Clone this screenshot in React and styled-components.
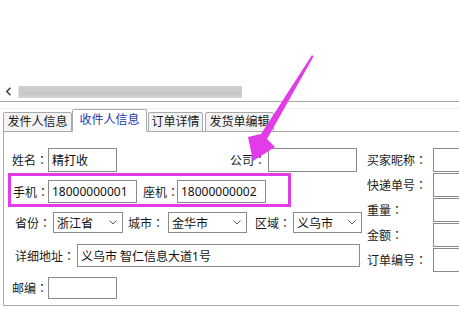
import React from 'react';
import styled, { createGlobalStyle } from 'styled-components';

const GlobalStyle = createGlobalStyle`
  html, body {
    margin: 0;
    padding: 0;
    background: #ffffff;
    overflow: hidden;
  }
  body {
    font-family: "Noto Sans", "Noto Sans CJK SC", sans-serif;
    font-size: 12px;
    color: #1a1a1a;
  }
`;

const Page = styled.div`
  position: relative;
  width: 459px;
  height: 310px;
  overflow: hidden;
`;

const AddressRow = styled.div`
  display: flex;
  align-items: center;
  height: 13px;
  margin-top: 85px;
  padding-left: 5px;
`;

const BackChevron = styled.svg`
  width: 7px;
  height: 9px;
  margin-right: 6px;
`;

const BlurBar = styled.div`
  width: 223px;
  height: 12px;
  background: linear-gradient(180deg, #cfcfcf 0%, #c6c6c6 70%, #d6d6d6 100%);
  border-left: 1px solid #e4e4e4;
`;

const Divider = styled.div`
  margin-top: 3px;
  height: 1px;
  background: #a6a6a6;
  box-shadow: 0 7px 0 #f0f0f0;
`;

const TabStrip = styled.div`
  display: flex;
  align-items: flex-end;
  margin-top: 7px;
  padding-left: 3px;
  position: relative;
  z-index: 1;
`;

const Tab = styled.div`
  box-sizing: border-box;
  width: ${p => p.$w}px;
  height: ${p => (p.$active ? 23 : 20)}px;
  margin-left: ${p => p.$ml || 0}px;
  margin-bottom: -1px;
  border: 1px solid #a9a9a9;
  border-bottom: ${p => (p.$active ? '1px solid #ffffff' : '1px solid #a9a9a9')};
  border-radius: 2px 2px 0 0;
  background: ${p => (p.$active ? '#ffffff' : '#f3f3f3')};
  color: ${p => (p.$active ? '#2438b0' : '#1a1a1a')};
  font-size: 12px;
  line-height: ${p => (p.$active ? 19 : 17)}px;
  text-align: center;
  white-space: nowrap;
  position: relative;
  z-index: ${p => (p.$active ? 2 : 1)};
`;

const Panel = styled.div`
  display: flex;
  margin-left: 3px;
  border: 1px solid #a9a9a9;
  border-right: none;
  padding: 16px 0 3px 0;
  height: 154px;
  box-sizing: content-box;
`;

const LeftCol = styled.div`
  width: 363px;
  flex: none;
  display: flex;
  flex-direction: column;
`;

const Row = styled.div`
  display: flex;
  align-items: center;
  height: ${p => p.$h}px;
  margin-top: ${p => p.$mt || 0}px;
  padding-left: ${p => p.$pl || 0}px;
`;

const HighlightBox = styled.div`
  display: flex;
  align-items: center;
  align-self: flex-start;
  margin: 1px 0 0 4px;
  border: 3px solid #e23ce8;
  padding: 4px 22px 1px 2px;
`;

const LabelText = styled.span`
  flex: none;
  width: ${p => p.$w}px;
  margin-left: ${p => p.$ml || 0}px;
  white-space: nowrap;
  font-size: 12px;
  line-height: 16px;
  padding-top: 1px;
  color: #1a1a1a;
`;

// centred full-width colon, as the Windows UI font draws it
const Colon = styled.span`
  font-family: "Noto Sans CJK TC", "Noto Sans CJK SC", sans-serif;
`;

const Label = ({ children, ...rest }) => (
  <LabelText {...rest}>
    {children.replace(/：$/, '')}
    <Colon>：</Colon>
  </LabelText>
);

const Field = styled.div`
  flex: none;
  box-sizing: border-box;
  width: ${p => p.$w}px;
  height: ${p => p.$h || 23}px;
  border: 1px solid #8a8a8a;
  background: #ffffff;
  padding-left: 3px;
  display: flex;
  align-items: center;
  font-size: 12px;
  white-space: nowrap;
  overflow: hidden;
  color: #111;
`;

const Select = styled(Field)`
  justify-content: space-between;
  padding-right: 5px;
`;

const SelectChevron = styled.svg`
  width: 8px;
  height: 5px;
  flex: none;
`;

const RightCol = styled.div`
  flex: none;
  display: flex;
  flex-direction: column;
  gap: 1px;
`;

const RightRow = styled.div`
  display: flex;
  align-items: center;
  height: 24px;
`;

const ArrowLayer = styled.svg`
  position: absolute;
  left: 0;
  top: 0;
  width: 459px;
  height: 310px;
  pointer-events: none;
  z-index: 5;
`;

const Chevron = () => (
  <SelectChevron viewBox="0 0 8 5">
    <path d="M0.5 0.5 L4 4 L7.5 0.5" fill="none" stroke="#5a5a5a" strokeWidth="1" />
  </SelectChevron>
);

const rightFields = ['买家昵称：', '快递单号：', '重量：', '金额：', '订单编号：'];

export default function App() {
  return (
    <Page>
      <GlobalStyle />
      <AddressRow>
        <BackChevron viewBox="0 0 7 9">
          <path d="M5.5 0.8 L1.8 4.5 L5.5 8.2" fill="none" stroke="#444" strokeWidth="1.6" />
        </BackChevron>
        <BlurBar />
      </AddressRow>
      <Divider />

      <TabStrip>
        <Tab $w={69}>发件人信息</Tab>
        <Tab $w={75} $active>收件人信息</Tab>
        <Tab $w={55} $ml={1}>订单详情</Tab>
        <Tab $w={69} $ml={2}>发货单编辑</Tab>
      </TabStrip>

      <Panel>
        <LeftCol>
          <Row $h={24} $pl={8}>
            <Label $w={36}>姓名：</Label>
            <Field $w={69} $h={24}>精打收</Field>
            <Label $w={38} $ml={113}>公司：</Label>
            <Field $w={89} $h={24} />
          </Row>

          <HighlightBox>
            <Label $w={35}>手机：</Label>
            <Field $w={89}>18000000001</Field>
            <Label $w={34} $ml={6}>座机：</Label>
            <Field $w={89}>18000000002</Field>
          </HighlightBox>

          <Row $h={21} $mt={5} $pl={11}>
            <Label $w={38}>省份：</Label>
            <Select $w={70} $h={21}>浙江省<Chevron /></Select>
            <Label $w={40} $ml={5}>城市：</Label>
            <Select $w={79} $h={21}>金华市<Chevron /></Select>
            <Label $w={38} $ml={8}>区域：</Label>
            <Select $w={69} $h={21}>义乌市<Chevron /></Select>
          </Row>

          <Row $h={23} $mt={11} $pl={11}>
            <Label $w={62}>详细地址：</Label>
            <Field $w={283}>义乌市 智仁信息大道1号</Field>
          </Row>

          <Row $h={22} $mt={10} $pl={8}>
            <Label $w={36}>邮编：</Label>
            <Field $w={69} $h={22} />
          </Row>
        </LeftCol>

        <RightCol>
          {rightFields.map(name => (
            <RightRow key={name}>
              <Label $w={66}>{name}</Label>
              <Field $w={40} $h={24} />
            </RightRow>
          ))}
        </RightCol>
      </Panel>

      <ArrowLayer viewBox="0 0 459 310">
        <polygon
          points="312,55 313.5,56.5 267,139 275,147 253,161 248,137 261,134"
          fill="#e23ce8"
        />
      </ArrowLayer>
    </Page>
  );
}
